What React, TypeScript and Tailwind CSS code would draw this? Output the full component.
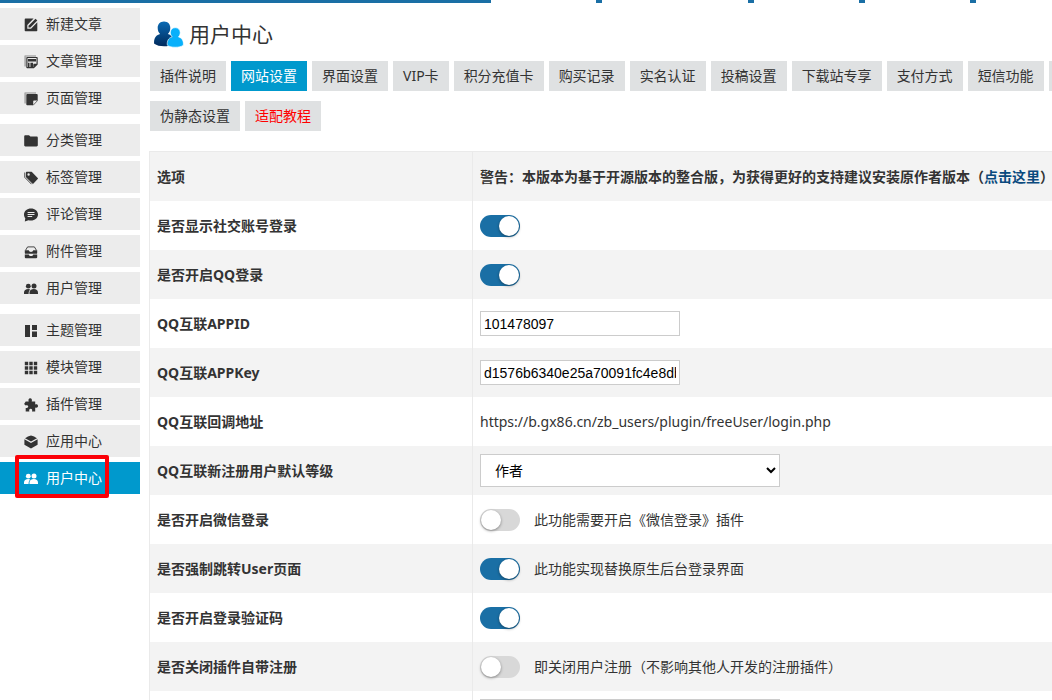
import type { ReactNode } from 'react';
import { clsx } from 'clsx';

interface MenuItem {
  label: string;
  icon: ReactNode;
  active?: boolean;
}

interface Setting {
  label: string;
  control: ReactNode;
}

function Icon({ children }: { children: ReactNode }) {
  return (
    <svg viewBox="0 0 14 14" className="w-3.5 h-3.5 mt-0.5 shrink-0" fill="currentColor" aria-hidden="true">
      {children}
    </svg>
  );
}

const usersIcon = (
  <Icon>
    <circle cx="4.3" cy="4.2" r="2.4" />
    <circle cx="10" cy="4" r="2.5" />
    <path d="M0 12v-1.600C0 8.300 1.700 7 4.200 7c.9 0 1.600.2 2.200.5-1.300 1-1.800 2.200-1.800 4.500z" />
    <path d="M5.500 12v-1.400C5.500 8.300 7.300 7 9.800 7 12.300 7 14 8.300 14 10.600V12z" />
  </Icon>
);

const menuGroups: MenuItem[][] = [
  [
    {
      label: '新建文章',
      icon: (
        <Icon>
          <path d="M1.500.6H9.600L3.300 7v3.700H7L13.300 4.300V12.500a.8.8 0 0 1-.8.8h-11a.8.8 0 0 1-.8-.8V1.400a.8.8 0 0 1 .8-.8z" />
          <path d="M11.500.8l1.800 1.800-6.900 7H4.500V7.700z" />
        </Icon>
      ),
    },
    {
      label: '文章管理',
      icon: (
        <Icon>
          <path d="M.3 1.300C.3.600.700.200 1.400.200H12v1.500H2v9.800H.3z" opacity=".35" />
          <path
            fillRule="evenodd"
            d="M3.200 1.900h9.600c.5 0 .9.400.9.900v6.600L9.900 13.200H3.200a.9.900 0 0 1-.9-.9V2.800c0-.5.400-.9.900-.9zM3.500 3.100V12h5.800V9.600l.7-.8h2.500V3.100z"
          />
          <path d="M4 3.900h8v2.600H4zM4 7.700h1.500V12H4zM6.400 7.700h2.700V12H6.400z" />
        </Icon>
      ),
    },
    {
      label: '页面管理',
      icon: (
        <Icon>
          <path d="M.3 1.300C.3.600.700.200 1.400.200H12v1.500H2v9.800H.3z" opacity=".35" />
          <path d="M3.200 1.900h9.600c.5 0 .9.400.9.900v5.600h-3.500c-.6 0-1 .4-1 1v3.800h-6a.9.900 0 0 1-.9-.9V2.800c0-.5.400-.9.900-.9z" />
          <path d="M9.200 13.200l4.500-4.800" fill="none" stroke="currentColor" strokeWidth=".7" />
        </Icon>
      ),
    },
  ],
  [
    {
      label: '分类管理',
      icon: (
        <Icon>
          <path d="M.2 2.500c0-.7.500-1.200 1.200-1.200H5L6.400 2.600h6.200c.7 0 1.200.5 1.200 1.200v7.500c0 .7-.5 1.200-1.200 1.200H1.400c-.7 0-1.200-.5-1.200-1.200z" />
        </Icon>
      ),
    },
    {
      label: '标签管理',
      icon: (
        <Icon>
          <path
            fillRule="evenodd"
            d="M2.600.8h4.500c.3 0 .6.100.8.300l5.800 5.800c.4.400.4.900 0 1.200l-4.200 4.300c-.4.400-.9.400-1.200 0L2.300 6.500a1 1 0 0 1-.3-.8V1.400c0-.3.300-.6.600-.6zM4.600 2.300a1.200 1.200 0 1 0 0 2.400 1.200 1.200 0 0 0 0-2.400z"
          />
          <path d="M.8 1.500v4.900l6.700 6.800" fill="none" stroke="currentColor" strokeWidth=".9" />
        </Icon>
      ),
    },
    {
      label: '评论管理',
      icon: (
        <Icon>
          <path
            fillRule="evenodd"
            d="M7 .6c3.900 0 7 2.600 7 6s-3.100 6-7 6c-.9 0-1.700-.1-2.500-.3L.8 13.400l.5-3.100C.5 9.300 0 8 0 6.600c0-3.400 3.100-6 7-6zM3.600 4.100v1h6.900v-1zM3.600 6.100v1h6.900v-1zM3.600 8.100v1h4.600v-1z"
          />
        </Icon>
      ),
    },
    {
      label: '附件管理',
      icon: (
        <Icon>
          <path d="M1.600 5.200L3.600 1.900h6.800l2 3.300" fill="none" stroke="currentColor" strokeWidth=".9" />
          <path d="M.8 5.300h4c.2 1 1.100 1.600 2.200 1.600s2-.6 2.200-1.600h4v2.600c0 .5-.4.900-.9.900H1.700c-.5 0-.9-.4-.9-.9zM.8 9.500h4c.2 1 1.100 1.500 2.200 1.500s2-.5 2.200-1.500h4v2.800c0 .5-.4.900-.9.900H1.700c-.5 0-.9-.4-.9-.9z" />
        </Icon>
      ),
    },
    { label: '用户管理', icon: usersIcon },
  ],
  [
    {
      label: '主题管理',
      icon: (
        <Icon>
          <path d="M1 1h5v12H1zM8 1h5v5H8zM8 7.500h5V13H8z" />
        </Icon>
      ),
    },
    {
      label: '模块管理',
      icon: (
        <Icon>
          <path d="M.8.8h3.400v3.400H.8zM5.300.8h3.400v3.400H5.300zM9.800.8h3.400v3.400H9.800zM.8 5.300h3.400v3.400H.8zM5.300 5.300h3.400v3.400H5.300zM9.800 5.300h3.400v3.400H9.800zM.8 9.800h3.400v3.400H.8zM5.300 9.800h3.400v3.400H5.300zM9.800 9.800h3.400v3.400H9.800z" />
        </Icon>
      ),
    },
    {
      label: '插件管理',
      icon: (
        <Icon>
          <path d="M1.700 3.500h3C4 1.700 4.700.2 6.200.2s2.200 1.500 1.500 3.300h3.500v3.100C12.700 6 14 6.600 14 8s-1.300 2-2.800 1.400v4.200H8c.6-1.600 0-2.800-1.300-2.800s-1.900 1.200-1.300 2.800H1.700v-3.700c1.600.4 2.500-.2 2.500-1.300S3.200 6.900 1.700 7.400L.1 5.900z" />
        </Icon>
      ),
    },
    {
      label: '应用中心',
      icon: (
        <Icon>
          <path d="M7 .4c2 .5 4.300 1.400 6 2.900L7 6.400 1 3.300C2.700 1.800 5 .9 7 .4z" />
          <path d="M.4 4.300L7 7.900l6.600-3.600v5.500L7 13.600.4 9.800z" />
        </Icon>
      ),
    },
    { label: '用户中心', icon: usersIcon, active: true },
  ],
];

const tabs = [
  '插件说明',
  '网站设置',
  '界面设置',
  'VIP卡',
  '积分充值卡',
  '购买记录',
  '实名认证',
  '投稿设置',
  '下载站专享',
  '支付方式',
  '短信功能',
];

function Switch({ label, on, note }: { label: string; on?: boolean; note?: string }) {
  return (
    <div className="flex items-center gap-3.5">
      <input
        type="checkbox"
        role="switch"
        aria-label={label}
        defaultChecked={on}
        className="appearance-none block w-10 h-[22px] p-px rounded-full bg-[#d8d8d8] checked:bg-[#1a6fa5] before:block before:w-5 before:h-5 before:rounded-full before:bg-white before:shadow-[0_1px_3px_rgba(0,0,0,0.4)] checked:before:translate-x-[18px]"
      />
      {note && <span>{note}</span>}
    </div>
  );
}

function TextField({ label, value }: { label: string; value: string }) {
  return (
    <input
      type="text"
      aria-label={label}
      defaultValue={value}
      className="block w-[200px] h-[25px] px-[3px] bg-white border border-[#ccc] text-black font-['Liberation_Sans',Arial,sans-serif]"
    />
  );
}

const selectClass = 'block w-[300px] h-[33px] pl-2.5 bg-white border border-[#ccc] text-black';

const settings: Setting[] = [
  { label: '是否显示社交账号登录', control: <Switch label="是否显示社交账号登录" on /> },
  { label: '是否开启QQ登录', control: <Switch label="是否开启QQ登录" on /> },
  { label: 'QQ互联APPID', control: <TextField label="QQ互联APPID" value="101478097" /> },
  { label: 'QQ互联APPKey', control: <TextField label="QQ互联APPKey" value="d1576b6340e25a70091fc4e8db" /> },
  { label: 'QQ互联回调地址', control: 'https://b.gx86.cn/zb_users/plugin/freeUser/login.php' },
  {
    label: 'QQ互联新注册用户默认等级',
    control: (
      <select aria-label="QQ互联新注册用户默认等级" className={selectClass}>
        <option>作者</option>
      </select>
    ),
  },
  { label: '是否开启微信登录', control: <Switch label="是否开启微信登录" note="此功能需要开启《微信登录》插件" /> },
  { label: '是否强制跳转User页面', control: <Switch label="是否强制跳转User页面" on note="此功能实现替换原生后台登录界面" /> },
  { label: '是否开启登录验证码', control: <Switch label="是否开启登录验证码" on /> },
  { label: '是否关闭插件自带注册', control: <Switch label="是否关闭插件自带注册" note="即关闭用户注册（不影响其他人开发的注册插件）" /> },
  { label: '', control: <select aria-label="注册等级" className={selectClass} /> },
];

function TopStrip() {
  return (
    <div className="flex h-[3px] bg-[#1a6fa5]">
      <div className="w-[491px] shrink-0" />
      <div className="flex flex-1 gap-1.5">
        <div className="w-[105px] shrink-0 bg-white" />
        <div className="w-[146px] shrink-0 bg-white" />
        <div className="w-[105px] shrink-0 bg-white" />
        <div className="w-[105px] shrink-0 bg-white" />
        <div className="flex-1 bg-white" />
      </div>
    </div>
  );
}

function Sidebar() {
  return (
    <nav className="flex flex-col gap-2.5 w-35 shrink-0 pt-[5px]">
      {menuGroups.map((group, i) => (
        <ul key={i} className="flex flex-col gap-[5px]">
          {group.map((item) => (
            <li key={item.label} className="relative">
              <a
                href="#"
                className={clsx(
                  'flex items-center gap-2 h-8 pl-6',
                  item.active ? 'bg-[#0099cd] text-white' : 'bg-[#ececec]'
                )}
              >
                {item.icon}
                {item.label}
              </a>
              {item.active && (
                <div className="absolute left-[15px] -top-[7px] w-[94px] h-[43px] border-4 border-[#fb0007] rounded-xs pointer-events-none" />
              )}
            </li>
          ))}
        </ul>
      ))}
    </nav>
  );
}

function TitleIcon() {
  return (
    <svg viewBox="0 0 32 32" className="w-8 h-8" aria-hidden="true">
      <defs>
        <linearGradient id="back" x1="0" y1="0" x2="0" y2="1">
          <stop offset="0" stopColor="#0a6ab4" />
          <stop offset="1" stopColor="#012a5c" />
        </linearGradient>
      </defs>
      <path
        fill="url(#back)"
        d="M12 3.500c4 0 6.300 2.800 6.300 6.400 0 2.600-1 4.600-2.400 6 3 .8 5.100 2.500 5.100 5.600v4.500c-2.500 1.700-5.500 2.300-9 2.300-4 0-7.300-.8-9.800-2.500-.5-4 .5-8.500 5.900-9.900-1.500-1.400-2.400-3.400-2.400-6 0-3.600 2.300-6.400 6.300-6.400z"
      />
      <path
        fill="#08b0fb"
        stroke="#fff"
        strokeWidth=".6"
        d="M23.300 9.700c3 0 4.900 2.100 4.900 4.900 0 1.900-.7 3.300-1.800 4.300 4 1 5.300 4.300 4.900 8.300-2 1.500-4.600 2-8 2s-6-.5-8-2c-.4-4 .9-7.300 4.900-8.300-1.100-1-1.800-2.400-1.800-4.300 0-2.800 1.900-4.900 4.900-4.900z"
      />
    </svg>
  );
}

const tabClass = 'h-[30px] px-2.5 shrink-0 whitespace-nowrap';

export default function App() {
  return (
    <div className="h-screen overflow-hidden bg-white text-sm text-[#333] font-['Noto_Sans','Noto_Sans_CJK_SC',sans-serif]">
      <TopStrip />
      <div className="flex">
        <Sidebar />
        <main className="flex-1 min-w-0 pl-[9px]">
          <header className="flex items-center gap-[5px] h-[58px] pt-1 pl-[3px]">
            <TitleIcon />
            <h1 className="text-[21px]">用户中心</h1>
          </header>

          <div className="flex flex-col gap-2.5 pl-px">
            <div className="flex gap-[5px] overflow-hidden">
              {tabs.map((tab) => (
                <button
                  key={tab}
                  type="button"
                  className={clsx(tabClass, tab === '网站设置' ? 'bg-[#0099cd] text-white' : 'bg-[#dfe1e2]')}
                >
                  {tab}
                </button>
              ))}
              <button type="button" aria-label="更多" className="grow h-[30px] bg-[#dfe1e2]" />
            </div>
            <div className="flex gap-[5px]">
              <button type="button" className={clsx(tabClass, 'bg-[#dfe1e2]')}>
                伪静态设置
              </button>
              <button type="button" className={clsx(tabClass, 'bg-[#dfe1e2] text-[#f00]')}>
                适配教程
              </button>
            </div>
          </div>

          <table className="w-full mt-5 table-fixed border-separate border-spacing-0 border-t border-l border-[#eaeaea] text-left">
            <thead>
              <tr className="h-[49px] bg-[#f3f3f3]">
                <th scope="col" className="w-[322px] px-[7px]">
                  选项
                </th>
                <th scope="col" className="pl-[7px] border-l border-[#eaeaea] whitespace-nowrap">
                  警告：本版本为基于开源版本的整合版，为获得更好的支持建议安装原作者版本（
                  <a href="#" className="text-[#0a4a7e]">
                    点击这里
                  </a>
                  <span className="[font-feature-settings:'halt']">）</span>
                </th>
              </tr>
            </thead>
            <tbody>
              {settings.map((row, i) => (
                <tr key={i} className="h-[49px] even:bg-[#f3f3f3]">
                  <th scope="row" className="px-[7px]">
                    {row.label}
                  </th>
                  <td className="pl-[7px] border-l border-[#eaeaea]">{row.control}</td>
                </tr>
              ))}
            </tbody>
          </table>
        </main>
      </div>
    </div>
  );
}
